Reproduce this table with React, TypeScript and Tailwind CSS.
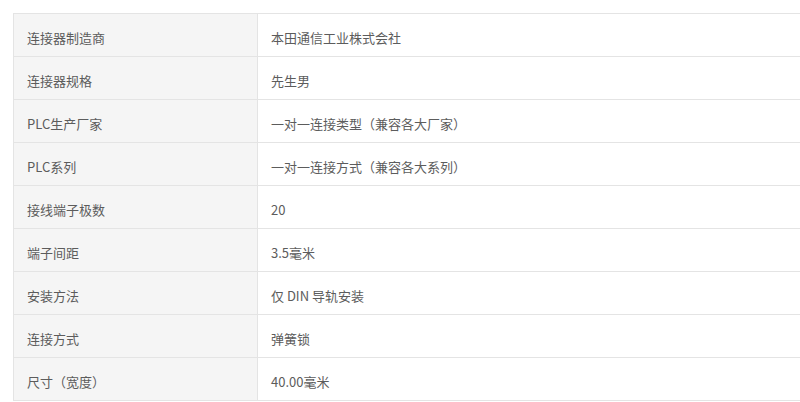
import React from "react";

const rows: [string, string][] = [
  ["连接器制造商", "本田通信工业株式会社"],
  ["连接器规格", "先生男"],
  ["PLC生产厂家", "一对一连接类型（兼容各大厂家）"],
  ["PLC系列", "一对一连接方式（兼容各大系列）"],
  ["接线端子极数", "20"],
  ["端子间距", "3.5毫米"],
  ["安装方法", "仅 DIN 导轨安装"],
  ["连接方式", "弹簧锁"],
  ["尺寸（宽度）", "40.00毫米"],
];

export default function App() {
  return (
    <div
      className="w-[800px] h-[402px] overflow-hidden bg-white pt-[13px] pl-[13px]"
      style={{ fontFamily: '"Microsoft YaHei", "Noto Sans CJK SC", "Noto Sans", sans-serif' }}
    >
      <div className="w-[820px] border-t border-l border-[#e4e4e4] text-[13px] text-[#5c5c5c]">
        {rows.map(([k, v]) => (
          <div key={k} className="flex h-[43px] border-b border-[#e4e4e4]">
            <div className="w-[244px] shrink-0 bg-[#f5f5f5] border-r border-[#e4e4e4] pl-[13px] pt-[6px] flex items-center">
              {k}
            </div>
            <div className="flex-1 pl-[13px] pt-[6px] flex items-center">{v}</div>
          </div>
        ))}
      </div>
    </div>
  );
}
